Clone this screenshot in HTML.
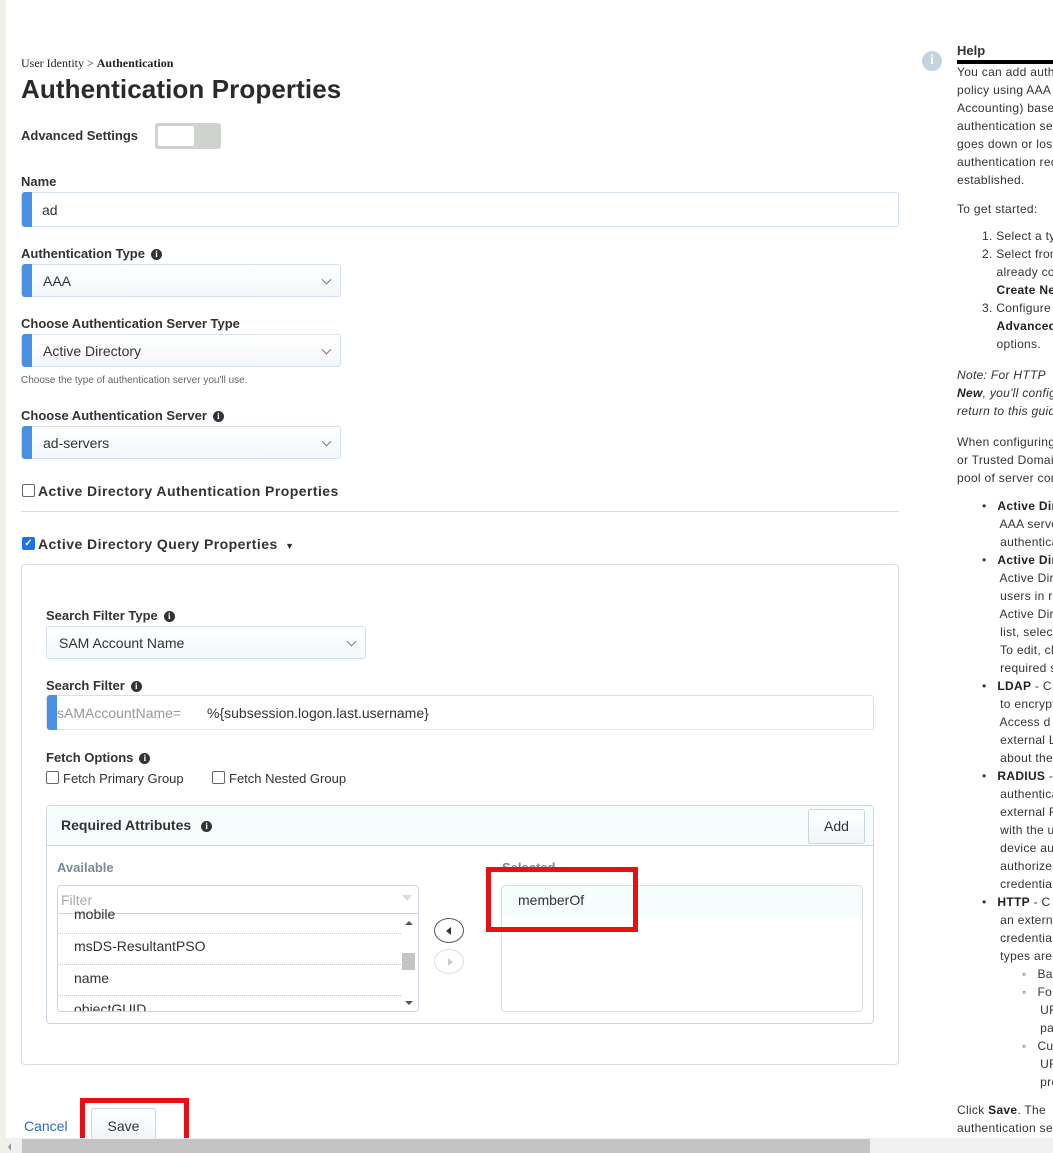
<!DOCTYPE html>
<html><head><meta charset="utf-8"><style>
*{box-sizing:border-box;margin:0;padding:0}
body{width:1053px;height:1153px;overflow:hidden;background:#fff;font-family:"Liberation Sans",sans-serif;color:#333;position:relative}
.a{position:absolute;white-space:nowrap}
.lbl{font-size:13px;font-weight:bold;color:#333}
.info{display:inline-block;width:11px;height:11px;border-radius:50%;background:#333;color:#fff;font-size:9px;font-weight:bold;text-align:center;line-height:11px;font-family:"Liberation Serif",serif;vertical-align:1px;margin-left:6px}
.inp{position:absolute;border:1px solid #d6e0ea;border-radius:3px;background:#fff;font-size:14px;color:#333}
.bar{position:absolute;left:0;top:-1px;bottom:-1px;width:10px;background:#4a90e2;border-radius:3px 0 0 3px}
.sel{background:linear-gradient(#fff,#f3f7fb)}
.chev{position:absolute;right:10px;top:50%;width:7px;height:7px;border-right:1px solid #777;border-bottom:1px solid #777;transform:translateY(-70%) rotate(45deg)}
.cb{position:absolute;width:13px;height:13px;border:1px solid #666;border-radius:2px;background:#fff}
.help{font-size:12px;color:#333;line-height:18px;letter-spacing:0.3px}
.help b{color:#222}
.red{position:absolute;border:5px solid #e81010}
#hp{position:absolute;left:900px;top:0;width:153px;height:1138px;overflow:hidden}
</style></head><body>
<div class="a" style="left:0;top:0;width:6px;height:1153px;background:#f0efe8"></div>

<div class="a" style="left:21px;top:56px;font-family:'Liberation Serif',serif;font-size:12px;color:#222">User Identity &gt; <b>Authentication</b></div>
<div class="a" style="left:21px;top:74px;font-size:26px;font-weight:bold;color:#2a2a2a;letter-spacing:0.1px">Authentication Properties</div>
<div class="a lbl" style="left:21px;top:128px">Advanced Settings</div>
<div class="a" style="left:155px;top:123px;width:66px;height:26px;background:#ced3d0;border-radius:3px"><div style="position:absolute;left:3px;top:3px;width:36px;height:20px;background:#fff;border-radius:2px"></div></div>

<div class="a lbl" style="left:21px;top:174px">Name</div>
<div class="inp" style="left:21px;top:192px;width:878px;height:35px"><div class="bar"></div><span class="a" style="left:20px;top:9px">ad</span></div>

<div class="a lbl" style="left:21px;top:246px">Authentication Type<span class="info">i</span></div>
<div class="inp sel" style="left:21px;top:264px;width:320px;height:33px"><div class="bar"></div><span class="a" style="left:21px;top:8px">AAA</span><div class="chev"></div></div>

<div class="a lbl" style="left:21px;top:316px">Choose Authentication Server Type</div>
<div class="inp sel" style="left:21px;top:334px;width:320px;height:33px"><div class="bar"></div><span class="a" style="left:21px;top:8px">Active Directory</span><div class="chev"></div></div>
<div class="a" style="left:21px;top:375px;font-size:10px;color:#666">Choose the type of authentication server you'll use.</div>

<div class="a lbl" style="left:21px;top:408px">Choose Authentication Server<span class="info">i</span></div>
<div class="inp sel" style="left:21px;top:426px;width:320px;height:33px"><div class="bar"></div><span class="a" style="left:21px;top:8px">ad-servers</span><div class="chev"></div></div>

<div class="cb" style="left:22px;top:484px"></div>
<div class="a lbl" style="left:38px;top:483px;font-size:14px;letter-spacing:0.45px">Active Directory Authentication Properties</div>
<div class="a" style="left:21px;top:511px;width:878px;height:1px;background:#d6dde3"></div>

<div class="cb" style="left:22px;top:537px;background:#1a73e8;border-color:#1a73e8;color:#fff;font-size:10px;line-height:11px;text-align:center;font-weight:bold">✓</div>
<div class="a lbl" style="left:38px;top:536px;font-size:14px;letter-spacing:0.45px">Active Directory Query Properties <span style="font-size:9px;margin-left:3px">▼</span></div>

<div class="a" style="left:21px;top:564px;width:878px;height:501px;border:1px solid #d6dde3;border-radius:4px"></div>

<div class="a lbl" style="left:46px;top:608px">Search Filter Type<span class="info">i</span></div>
<div class="inp sel" style="left:46px;top:626px;width:320px;height:33px"><span class="a" style="left:12px;top:8px">SAM Account Name</span><div class="chev"></div></div>

<div class="a lbl" style="left:46px;top:678px">Search Filter<span class="info">i</span></div>
<div class="inp" style="left:46px;top:695px;width:828px;height:35px"><div class="bar"></div><span class="a" style="left:10px;top:9px;color:#999">sAMAccountName=</span><span class="a" style="left:160px;top:9px">%{subsession.logon.last.username}</span></div>

<div class="a lbl" style="left:46px;top:750px">Fetch Options<span class="info">i</span></div>
<div class="cb" style="left:46px;top:771px"></div><div class="a" style="left:63px;top:771px;font-size:13px">Fetch Primary Group</div>
<div class="cb" style="left:212px;top:771px"></div><div class="a" style="left:229px;top:771px;font-size:13px">Fetch Nested Group</div>

<div class="a" style="left:46px;top:805px;width:828px;height:219px;border:1px solid #ccd5dd;border-radius:4px"></div>
<div class="a" style="left:47px;top:806px;width:826px;height:40px;background:#f7fdfd;border-bottom:1px solid #ccd5dd"></div>
<div class="a lbl" style="left:61px;top:817px;font-size:14px">Required Attributes<span class="info" style="margin-left:10px">i</span></div>
<div class="a" style="left:808px;top:809px;width:57px;height:35px;border:1px solid #ccd5dd;border-radius:3px;background:linear-gradient(#fff,#f0f5f9);font-size:14px;text-align:center;line-height:33px">Add</div>

<div class="a" style="left:57px;top:860px;font-size:13px;font-weight:bold;color:#7a8a9a">Available</div>
<div class="a" style="left:57px;top:885px;width:362px;height:127px;border:1px solid #ccd5dd;border-radius:4px;overflow:hidden;font-size:14px">
 <div style="position:absolute;left:0;top:0;right:0;height:28px;border-bottom:1px solid #ccd5dd;color:#aaa;padding:6px 3px">Filter</div>
 <div style="position:absolute;right:6px;top:9px;width:0;height:0;border-left:5px solid transparent;border-right:5px solid transparent;border-top:6px solid #ddd"></div>
 <div style="position:absolute;left:16px;top:20px">mobile</div>
 <div style="position:absolute;left:0;right:17px;top:47px;border-top:1px dotted #ccc"></div>
 <div style="position:absolute;left:16px;top:52px">msDS-ResultantPSO</div>
 <div style="position:absolute;left:0;right:17px;top:78px;border-top:1px dotted #ccc"></div>
 <div style="position:absolute;left:16px;top:84px">name</div>
 <div style="position:absolute;left:0;right:17px;top:109px;border-top:1px dotted #ccc"></div>
 <div style="position:absolute;left:16px;top:115px">objectGUID</div>
 <div style="position:absolute;right:0;top:29px;width:17px;bottom:0;background:#fff"></div>
 <div style="position:absolute;right:5px;top:35px;border-left:4px solid transparent;border-right:4px solid transparent;border-bottom:4px solid #555"></div>
 <div style="position:absolute;right:3px;top:67px;width:13px;height:17px;background:#c4c4c4"></div>
 <div style="position:absolute;right:5px;top:115px;border-left:4px solid transparent;border-right:4px solid transparent;border-top:4px solid #555"></div>
</div>
<div class="a" style="left:434px;top:918px;width:30px;height:25px;border:1px solid #555;border-radius:50%"><div style="position:absolute;left:11px;top:8px;border-top:4px solid transparent;border-bottom:4px solid transparent;border-right:5px solid #333"></div></div>
<div class="a" style="left:434px;top:949px;width:30px;height:25px;border:1px solid #ddd;border-radius:50%"><div style="position:absolute;left:13px;top:8px;border-top:4px solid transparent;border-bottom:4px solid transparent;border-left:5px solid #ccc"></div></div>

<div class="a" style="left:502px;top:860px;font-size:13px;font-weight:bold;color:#7a8a9a">Selected</div>
<div class="a" style="left:501px;top:885px;width:362px;height:127px;border:1px solid #ddd;border-radius:4px;background:#fff;overflow:hidden"><div style="height:30px;background:#f5fdfd;padding:6px 16px;font-size:14px">memberOf</div></div>

<div class="a" style="left:24px;top:1118px;font-size:14px;color:#2a6ebb">Cancel</div>
<div class="a" style="left:91px;top:1108px;width:65px;height:30px;border:1px solid #ccd5dd;border-bottom:none;border-radius:3px 3px 0 0;background:linear-gradient(#fff,#f0f6fb);font-size:14px;text-align:center;line-height:34px">Save</div>

<div class="red" style="left:486px;top:867px;width:152px;height:65px"></div>
<div class="red" style="left:80px;top:1098px;width:109px;height:55px"></div>

<div class="a" style="left:6px;top:1138px;width:1047px;height:15px;background:#f0f0f0"></div>
<div class="a" style="left:8px;top:1140px;width:12px;height:13px"><div style="position:absolute;left:0;top:3px;border-top:4px solid transparent;border-bottom:4px solid transparent;border-right:3px solid #999"></div></div>
<div class="a" style="left:22px;top:1139px;width:848px;height:14px;background:#c4c4c4"></div>

<!-- help -->
<div id="hp">
<div class="a" style="left:22px;top:51px;width:20px;height:20px;border-radius:50%;background:#c5d3df;color:#fff;font-weight:bold;font-family:'Liberation Serif',serif;font-size:14px;text-align:center;line-height:20px">i</div>
<div class="a" style="left:57px;top:43px;font-size:13px;font-weight:bold;color:#333">Help</div>
<div class="a" style="left:57px;top:60px;width:96px;height:4px;background:#000"></div>
<div class="a help" style="left:57px;top:63px">You can add authentication<br>policy using AAA (Authentication<br>Accounting) based<br>authentication server<br>goes down or loses<br>authentication request<br>established.</div>
<div class="a help" style="left:57px;top:200px">To get started:</div>
<div class="a help" style="left:82px;top:227px">1. Select a type<br>2. Select from<br>&nbsp;&nbsp;&nbsp; already configured<br>&nbsp;&nbsp;&nbsp; <b>Create New</b><br>3. Configure<br>&nbsp;&nbsp;&nbsp; <b>Advanced</b><br>&nbsp;&nbsp;&nbsp; options.</div>
<div class="a help" style="left:57px;top:366px;font-style:italic">Note: For HTTP<br><b>New</b>, you'll configure<br>return to this guide</div>
<div class="a help" style="left:57px;top:433px">When configuring<br>or Trusted Domain<br>pool of server config</div>
<div class="a help" style="left:82px;top:497px">•&nbsp;&nbsp; <b>Active Directory</b><br>&nbsp;&nbsp;&nbsp;&nbsp; AAA server<br>&nbsp;&nbsp;&nbsp;&nbsp; authentication<br>•&nbsp;&nbsp; <b>Active Directory</b><br>&nbsp;&nbsp;&nbsp;&nbsp; Active Directory<br>&nbsp;&nbsp;&nbsp;&nbsp; users in r<br>&nbsp;&nbsp;&nbsp;&nbsp; Active Dir<br>&nbsp;&nbsp;&nbsp;&nbsp; list, select<br>&nbsp;&nbsp;&nbsp;&nbsp; To edit, cl<br>&nbsp;&nbsp;&nbsp;&nbsp; required s<br>•&nbsp;&nbsp; <b>LDAP</b> - C<br>&nbsp;&nbsp;&nbsp;&nbsp; to encrypt<br>&nbsp;&nbsp;&nbsp;&nbsp; Access d<br>&nbsp;&nbsp;&nbsp;&nbsp; external L<br>&nbsp;&nbsp;&nbsp;&nbsp; about the<br>•&nbsp;&nbsp; <b>RADIUS</b> -<br>&nbsp;&nbsp;&nbsp;&nbsp; authentication<br>&nbsp;&nbsp;&nbsp;&nbsp; external R<br>&nbsp;&nbsp;&nbsp;&nbsp; with the u<br>&nbsp;&nbsp;&nbsp;&nbsp; device aut<br>&nbsp;&nbsp;&nbsp;&nbsp; authorizes<br>&nbsp;&nbsp;&nbsp;&nbsp; credential<br>•&nbsp;&nbsp; <b>HTTP</b> - C<br>&nbsp;&nbsp;&nbsp;&nbsp; an external<br>&nbsp;&nbsp;&nbsp;&nbsp; credential<br>&nbsp;&nbsp;&nbsp;&nbsp; types are</div>
<div class="a help" style="left:122px;top:965px">◦&nbsp;&nbsp; Ba<br>◦&nbsp;&nbsp; Fo<br>&nbsp;&nbsp;&nbsp;&nbsp; UR<br>&nbsp;&nbsp;&nbsp;&nbsp; par<br>◦&nbsp;&nbsp; Cu<br>&nbsp;&nbsp;&nbsp;&nbsp; UR<br>&nbsp;&nbsp;&nbsp;&nbsp; pro</div>
<div class="a help" style="left:57px;top:1101px">Click <b>Save</b>. The<br>authentication se</div>
</div>
</body></html>
